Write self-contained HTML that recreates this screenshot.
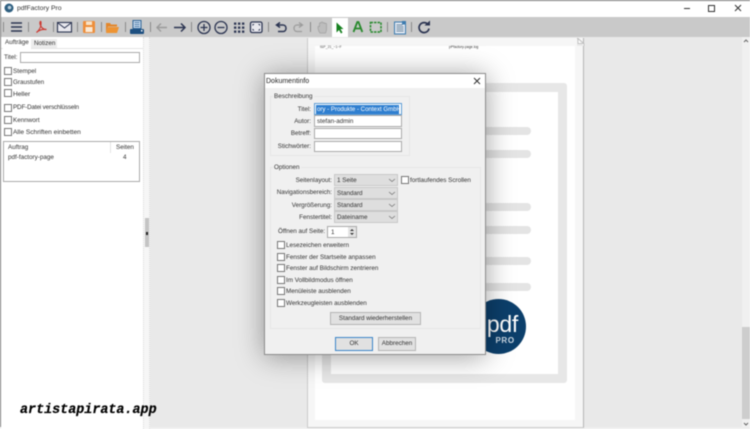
<!DOCTYPE html>
<html><head><meta charset="utf-8">
<style>
html,body{margin:0;padding:0;background:#fff}
#r{position:relative;width:750px;height:429px;overflow:hidden;background:#fff;font-family:"Liberation Sans",sans-serif;font-size:6.3px;color:#333;filter:blur(.45px)}
#r div{position:absolute;box-sizing:border-box}
.t{white-space:nowrap;line-height:9px;height:9px}
.c{width:8px;height:8px;background:#fff;border:1px solid #777}
.i{background:#fff;border:1px solid #aaa}
.s{background:#dedede;border:1px solid #c8c8c8;left:334px;width:64px;height:12px;padding:1px 0 0 2px;line-height:9px}
.b{background:#e1e1e1;border:1px solid #b5b5b5;text-align:center;line-height:11px;color:#333}
.bar{left:470px;height:8px;width:61px;background:#e4e4e4;border-radius:4px}
</style></head><body>
<div id="r">
<div style="left:0;top:0;width:750px;height:1px;background:#777"></div>
<div style="left:0;top:0;width:1px;height:429px;background:#777"></div>
<div style="left:0;top:427px;width:750px;height:2px;background:#eee"></div>

<svg style="position:absolute;left:0;top:0" width="750" height="38" viewBox="0 0 750 38">
<circle cx="9" cy="8" r="4.5" fill="#2f5f80"/><circle cx="9.5" cy="7.5" r="1.8" fill="#b9cfdc"/>
<path d="M684 8.5h6" stroke="#333" fill="none"/><rect x="708.500" y="5.500" width="6" height="6" fill="none" stroke="#333"/><path d="M735 5l6 6M741 5l-6 6" stroke="#333" fill="none"/>
<rect x="1" y="17" width="749" height="20" fill="#c9c9c9"/>
<rect x="332" y="18" width="16" height="19" fill="#fff"/>
<g stroke="#8a8a8a" fill="none"><path d="M3.500 22v10M28.500 22v10M53.500 22v10M77.500 22v10M101.500 22v10M125.500 22v10M150.500 22v10M191.500 22v10M268.500 22v10M310.500 22v10M387.500 22v10M411.500 22v10"/></g>
<path d="M11 23h11M11 27h11M11 31h11" stroke="#2c3552" stroke-width="1.600" fill="none"/>
<path d="M36.500 32.500c3-2.500 5-6.500 4.500-10.500-.3-1.500-1.500 0-1 2 .8 3 3 5.500 6.500 5.500-3.500-.5-7.500.5-10 3z" fill="none" stroke="#cc3a32" stroke-width="1.200"/>
<rect x="57.500" y="22.500" width="14" height="9.500" fill="#e9e9ee" stroke="#2c3552" stroke-width="1.100"/><path d="M58 23l6.500 5 6.500-5" fill="none" stroke="#2c3552"/>
<rect x="83" y="21" width="12" height="12" rx="1" fill="#ee8e3b"/><rect x="86" y="21.500" width="6" height="3.500" fill="#f8e3c8"/><rect x="85.500" y="27" width="7" height="5" fill="#fbe9d4"/>
<path d="M106 23h4l1 1.500h6v2h-9l-2 6.500z" fill="#e3862a"/><path d="M108 27h11l-2 6h-11z" fill="#ee9433"/>
<rect x="133" y="20.500" width="8" height="8" fill="#cfdff0" stroke="#2d6497"/><path d="M134.500 22.500h5M134.500 24.500h5M134.500 26.500h5" stroke="#2d6497" stroke-width=".7"/><rect x="130" y="29" width="14" height="5" rx="1" fill="#1d4f80"/><rect x="141" y="30" width="1.500" height="1.500" fill="#fff"/>
<path d="M167 27.500h-10M161 23.500l-4 4 4 4" stroke="#9b9b9b" stroke-width="1.400" fill="none"/>
<path d="M174 27.500h11M181 23.500l4 4-4 4" stroke="#2c3552" stroke-width="1.500" fill="none"/>
<g stroke="#2c3552" stroke-width="1.300" fill="none"><circle cx="204" cy="27.500" r="6"/><path d="M200.500 27.500h7M204 24v7"/><circle cx="221" cy="27.500" r="6"/><path d="M217.500 27.500h7"/></g>
<g fill="#2c3552"><rect x="234" y="22.500" width="2.300" height="2.300"/><rect x="238" y="22.500" width="2.300" height="2.300"/><rect x="242" y="22.500" width="2.300" height="2.300"/><rect x="234" y="26.500" width="2.300" height="2.300"/><rect x="238" y="26.500" width="2.300" height="2.300"/><rect x="242" y="26.500" width="2.300" height="2.300"/><rect x="234" y="30.500" width="2.300" height="2.300"/><rect x="238" y="30.500" width="2.300" height="2.300"/><rect x="242" y="30.500" width="2.300" height="2.300"/></g>
<rect x="250.500" y="22" width="11.500" height="10.500" rx="1.500" fill="#e8e8ee" stroke="#2c3552" stroke-width="1.300"/><path d="M252.500 24v2l2-2zM260 24v2l-2-2zM252.500 30.500v-2l2 2zM260 30.500v-2l-2 2z" fill="#2c3552"/>
<path d="M280 22.500l-3.500 2.500 3.500 2.500M277 25h6c4 0 4 6.500 0 6.500h-5" fill="none" stroke="#2c3552" stroke-width="1.500"/>
<path d="M299 22.500l3.500 2.500-3.500 2.500M302 25h-5c-4 0-4 6.500 0 6.500h5" fill="none" stroke="#9c9c9c" stroke-width="1.300"/>
<path d="M320 33c-1.500-2-2-4-2-6 0-1 1.500-1 1.500 0v-3.500c0-1 1.500-1 1.500 0 0-2 2-2 2 0 0-1 2-1 2 .5 0-1 1.500-1 1.500 0V29c0 2-.5 3-1 4z" fill="#bdbdbd" stroke="#a3a3a3" stroke-width=".8"/>
<path d="M336.500 22.500v10l2.500-2.500 2 3.500 1.500-1-2-3.500h3z" fill="#16801f"/>
<path d="M353.500 32l3.800-10h1.200l3.800 10M355 28.500h6" fill="none" stroke="#27892c" stroke-width="1.800"/>
<rect x="370.500" y="22.500" width="10.500" height="9.500" fill="none" stroke="#27892c" stroke-width="1.500" stroke-dasharray="2.500 1"/>
<rect x="394.500" y="22" width="11" height="12" fill="#dfe7f0" stroke="#3d7cb0"/><path d="M396.500 25h6M396.500 27h7M396.500 29h7M396.500 31h7" stroke="#4a6a88" stroke-width=".7"/><rect x="402" y="21" width="4" height="3.500" fill="#3d7cb0"/>
<path d="M428 24.500a5 5 0 1 0 1 4" fill="none" stroke="#2c3552" stroke-width="1.700"/><path d="M424.500 25.500h5.500v-5z" fill="#2c3552"/>
</svg>
<div class="t" style="left:17px;top:4px;font-size:6.800px;color:#333">pdfFactory Pro</div>

<!-- sidebar -->
<div style="left:1px;top:37px;width:143px;height:392px;background:#fff"></div>
<div style="left:143px;top:37px;width:7px;height:392px;background:#f6f6f6;border-left:1px dotted #ddd;border-right:1px dotted #ddd"></div>
<div style="left:145px;top:218px;width:4px;height:29px;background:#c4c4c4"></div>
<div style="left:146px;top:231.500px;width:2px;height:3px;background:#222"></div>
<div style="left:31px;top:39px;width:26px;height:10px;background:#ececec"></div>
<div style="left:1px;top:48px;width:143px;height:1px;background:#e4e4e4"></div>
<div style="left:3px;top:37px;width:28px;height:12px;background:#fff"></div>
<div class="t" style="left:5px;top:38px">Aufträge</div>
<div class="t" style="left:34px;top:39px">Notizen</div>
<div class="t" style="left:4px;top:53px">Titel:</div>
<div class="i" style="left:20px;top:52px;width:120px;height:11px"></div>
<div class="c" style="left:4px;top:67px"></div><div class="t" style="left:13px;top:67px">Stempel</div>
<div class="c" style="left:4px;top:78px"></div><div class="t" style="left:13px;top:78px">Graustufen</div>
<div class="c" style="left:4px;top:89px"></div><div class="t" style="left:13px;top:90px;font-size:6.600px">Heller</div>
<div class="c" style="left:4px;top:104px"></div><div class="t" style="left:13px;top:103px;letter-spacing:-.15px">PDF-Datei verschlüsseln</div>
<div class="c" style="left:4px;top:116px"></div><div class="t" style="left:13px;top:116px">Kennwort</div>
<div class="c" style="left:4px;top:128px"></div><div class="t" style="left:13px;top:128px;font-size:6.600px">Alle Schriften einbetten</div>
<div style="left:3px;top:141px;width:137px;height:41px;background:#fff;border:1px solid #aaa"></div>
<div style="left:110px;top:142px;width:1px;height:11px;background:#e4e4e4"></div>
<div class="t" style="left:8px;top:143px">Auftrag</div>
<div class="t" style="left:116px;top:143px">Seiten</div>
<div class="t" style="left:8px;top:153px">pdf-factory-page</div>
<div class="t" style="left:123px;top:153px">4</div>

<!-- canvas -->
<div style="left:150px;top:37px;width:592px;height:390px;background:#e9e9e9"></div>
<div style="left:742px;top:37px;width:8px;height:390px;background:#f0f0f0"></div>
<div style="left:742px;top:327px;width:8px;height:92px;background:#cdcdcd"></div>
<svg style="position:absolute;left:742px;top:37px" width="8" height="392"><path d="M2 5l2-2 2 2M2 386l2 2 2-2" stroke="#666" fill="none"/></svg>

<!-- page -->
<div style="left:307px;top:38px;width:277px;height:390px;background:#f6f6f6;border-right:1px solid #b5b5b5;border-left:1px solid #ccc;border-bottom:1px solid #ccc"></div>
<div style="left:315px;top:46px;width:260px;height:374px;background:#fff"></div>
<svg style="position:absolute;left:577px;top:38px" width="8" height="8"><path d="M0 0h1l6 5v3h-7z" fill="#e9e9e9"/><path d="M0 .5h1l6 5v2.500M1 .5v5h6" fill="#fff" stroke="#b5b5b5" stroke-width=".7"/></svg>
<div style="left:322px;top:83px;width:245px;height:300px;background:#fff;border:9px solid #e7e7e7;border-radius:3px"></div>
<div class="bar" style="top:127px"></div><div class="bar" style="top:150px"></div><div class="bar" style="top:203px"></div><div class="bar" style="top:226px"></div><div class="bar" style="top:257px"></div><div class="bar" style="top:283px"></div>
<div class="t" style="left:320px;top:43px;font-size:3.500px;color:#555">f&amp;P_21_~1~F</div>
<div class="t" style="left:449px;top:43px;font-size:3.500px;color:#333">pf*factory-page.log</div>
<div style="left:471px;top:298.500px;width:55px;height:55px;border-radius:50%;background:#0c3f6b"></div>
<div class="t" style="left:468px;top:312px;height:24px;line-height:24px;font-size:23px;color:#fff;font-weight:normal;width:50px;text-align:right;letter-spacing:-.3px">pdf</div>
<div class="t" style="left:495.500px;top:336px;height:10px;line-height:10px;font-size:8px;color:#cfdbe6;font-weight:bold;letter-spacing:.6px">PRO</div>

<!-- dialog -->
<div style="left:264px;top:73px;width:222px;height:282px;background:#f0f0f0;border:1px solid #8c8c8c;box-shadow:0 2px 26px rgba(0,0,0,.38)"></div>
<div style="left:265px;top:74px;width:220px;height:14px;background:#fff"></div>
<div class="t" style="left:266px;top:77px;font-size:7px;color:#222">Dokumentinfo</div>
<svg style="position:absolute;left:473px;top:77px" width="8" height="8"><path d="M1 1l6 6M7 1l-6 6" stroke="#333" fill="none"/></svg>

<div style="left:270px;top:96px;width:140px;height:60px;border:1px solid #e6e6e6"></div>
<div class="t" style="left:273px;top:92px;background:#f0f0f0;padding:0 1px">Beschreibung</div>
<div class="t" style="left:270px;top:105px;width:41px;text-align:right">Titel:</div>
<div class="t" style="left:270px;top:117px;width:41px;text-align:right">Autor:</div>
<div class="t" style="left:270px;top:129px;width:41px;text-align:right">Betreff:</div>
<div class="t" style="left:270px;top:142px;width:41px;text-align:right">Stichwörter:</div>
<div class="i" style="left:314px;top:103px;width:88px;height:12px;border-color:#5b9bd5"></div>
<div style="left:316px;top:105px;width:83px;height:9px;background:#2f7fd0"></div>
<div class="t" style="left:317px;top:105px;color:#fff;width:82px;overflow:hidden;font-size:6.100px">ory - Produkte - Context GmbH</div>
<div class="i" style="left:314px;top:115px;width:88px;height:12px"></div>
<div class="t" style="left:317px;top:117px">stefan-admin</div>
<div class="i" style="left:314px;top:128px;width:88px;height:11px"></div>
<div class="i" style="left:314px;top:141px;width:88px;height:11px"></div>

<div style="left:270px;top:167px;width:211px;height:162px;border:1px solid #e6e6e6"></div>
<div class="t" style="left:273px;top:163px;background:#f0f0f0;padding:0 1px">Optionen</div>
<div class="t" style="left:270px;top:176px;width:62px;text-align:right">Seitenlayout:</div>
<div class="t" style="left:270px;top:188px;width:62px;text-align:right">Navigationsbereich:</div>
<div class="t" style="left:270px;top:201px;width:62px;text-align:right">Vergrößerung:</div>
<div class="t" style="left:270px;top:213px;width:62px;text-align:right">Fenstertitel:</div>
<div class="s" style="top:174px">1 Seite</div>
<div class="s" style="top:187px">Standard</div>
<div class="s" style="top:199px">Standard</div>
<div class="s" style="top:211px">Dateiname</div>
<svg style="position:absolute;left:388px;top:174px" width="8" height="50"><path d="M1 5l3 2.500 3-2.500M1 18l3 2.500 3-2.500M1 30l3 2.500 3-2.500M1 42l3 2.500 3-2.500" stroke="#777" fill="none" stroke-width=".8"/></svg>
<div class="c" style="left:401px;top:176px"></div>
<div class="t" style="left:410px;top:176px">fortlaufendes Scrollen</div>
<div class="t" style="left:278px;top:227px">Öffnen auf Seite:</div>
<div class="i" style="left:327px;top:226px;width:30px;height:12px;padding:1px 0 0 3px;line-height:9px;color:#333">1</div>
<div style="left:348px;top:227px;width:8px;height:10px;background:#e4e4e4"></div>
<svg style="position:absolute;left:348px;top:227px" width="8" height="10"><path d="M2 4l2-2 2 2zM2 6l2 2 2-2z" fill="#333"/></svg>
<div class="c" style="left:277px;top:241px"></div><div class="t" style="left:286px;top:241px">Lesezeichen erweitern</div>
<div class="c" style="left:277px;top:253px"></div><div class="t" style="left:286px;top:253px">Fenster der Startseite anpassen</div>
<div class="c" style="left:277px;top:264px"></div><div class="t" style="left:286px;top:264px">Fenster auf Bildschirm zentrieren</div>
<div class="c" style="left:277px;top:276px"></div><div class="t" style="left:286px;top:276px">Im Vollbildmodus öffnen</div>
<div class="c" style="left:277px;top:287px"></div><div class="t" style="left:286px;top:287px">Menüleiste ausblenden</div>
<div class="c" style="left:277px;top:299px"></div><div class="t" style="left:286px;top:299px">Werkzeugleisten ausblenden</div>
<div class="b" style="left:330px;top:312px;width:91px;height:13px">Standard wiederherstellen</div>
<div class="b" style="left:335px;top:337px;width:38px;height:14px;border:1.500px solid #3a85c8;line-height:11px">OK</div>
<div class="b" style="left:378px;top:337px;width:38px;height:14px;line-height:12px">Abbrechen</div>

<div class="t" style="left:20px;top:403px;height:15px;line-height:15px;font-family:'Liberation Mono',monospace;font-weight:bold;font-style:italic;font-size:13.400px;color:#000;-webkit-text-stroke:.2px #000">artistapirata.app</div>
</div>
</body></html>
